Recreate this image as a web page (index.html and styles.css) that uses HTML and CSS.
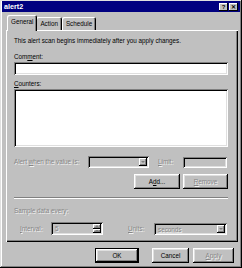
FILE: index.html
```html
<!DOCTYPE html>
<html lang="en">
    <head>
        <meta charset="UTF-8" />
        <title>alert2</title>
        <link rel="stylesheet" href="styles.css">
    </head>
    <body>
        <div class="dialog">
            <div class="titlebar">
                <span class="title">alert2</span>
                <div class="title-buttons">
                    <span class="tbtn">?</span>
                    <span class="tbtn">&#x2715;</span>
                </div>
            </div>

            <div class="tabs">
                <div class="tab active">General</div>
                <div class="tab">Action</div>
                <div class="tab">Schedule</div>
            </div>

            <div class="panel">
                <p class="intro">This alert scan begins immediately after you apply changes.</p>

                <label class="caption">Com<u>m</u>ent:</label>
                <div class="field"></div>

                <label class="caption gap-counters"><u>C</u>ounters:</label>
                <div class="field list"></div>

                <div class="row alert-row">
                    <span class="disabled alert-label">Alert <u>w</u>hen the value is:</span>
                    <div class="combo alert-combo"><span class="drop"><i class="arrow"></i></span></div>
                    <span class="disabled limit-label"><u>L</u>imit:</span>
                    <div class="field limit-field"></div>
                </div>

                <div class="row add-row">
                    <button class="btn add-btn">A<u>d</u>d...</button>
                    <button class="btn remove-btn disabled"><u>R</u>emove</button>
                </div>

                <div class="separator"></div>

                <div class="disabled sample">Sample data every:</div>

                <div class="row interval-row">
                    <span class="disabled interval-label"><u>I</u>nterval:</span>
                    <div class="field spin">
                        <span class="disabled value">5</span>
                        <span class="spin-btns">
                            <span class="spin-btn"><i class="arrow up"></i></span>
                            <span class="spin-btn"><i class="arrow"></i></span>
                        </span>
                    </div>
                    <span class="disabled units-label"><u>U</u>nits:</span>
                    <div class="combo units-combo">
                        <span class="disabled value">seconds</span>
                        <span class="drop"><i class="arrow"></i></span>
                    </div>
                </div>
            </div>

            <div class="footer">
                <button class="btn default ok-btn">OK</button>
                <button class="btn cancel-btn">Cancel</button>
                <button class="btn apply-btn disabled"><u>A</u>pply</button>
            </div>
        </div>
    </body>
</html>
```

FILE: styles.css
```css
* {
    box-sizing: border-box;
}

body {
    margin: 0;
    background: #c0c0c0;
    font-family: "Liberation Sans", Arial, sans-serif;
    font-size: 6.3px;
    line-height: 8px;
    color: #000;
}

u {
    text-decoration-thickness: 0.5px;
    text-underline-offset: 1px;
}

.dialog {
    width: 242px;
    height: 268px;
    padding: 1px 2px 2px;
    background: #c0c0c0;
    box-shadow: inset -1px -1px #000, inset 1px 1px #dfdfdf,
        inset -2px -2px #808080, inset 2px 2px #fff;
}

.titlebar {
    display: flex;
    align-items: center;
    justify-content: space-between;
    height: 11px;
    padding: 0 2px;
    background: #000080;
    color: #fff;
}

.title {
    font-weight: bold;
    font-size: 7.2px;
}

.title-buttons {
    display: flex;
    gap: 1px;
}

.tbtn {
    display: flex;
    align-items: center;
    justify-content: center;
    width: 9px;
    height: 8px;
    background: #c0c0c0;
    color: #000;
    font-size: 6px;
    font-weight: bold;
    box-shadow: inset -1px -1px #000, inset 1px 1px #fff;
}

/* tabs */

.tabs {
    display: flex;
    align-items: flex-end;
    height: 15px;
    margin: 3px 0 0 5px;
    padding-left: 1px;
}

.tab {
    height: 13px;
    padding: 0 4px;
    line-height: 13px;
    border-radius: 2px 2px 0 0;
    box-shadow: inset 1px 1px #fff, inset -1px 0 #000, inset -2px 0 #808080;
}

.tab.active {
    position: relative;
    z-index: 1;
    height: 16px;
    margin: 0 -1px -1px;
    padding: 0 4px 2px;
    background: #c0c0c0;
}

/* panel */

.panel {
    height: 212px;
    margin: 0 2px 0 4px;
    padding: 7px 10px 0 8px;
    box-shadow: inset 1px 1px #fff, inset -1px -1px #000,
        inset -2px -2px #808080;
}

.intro {
    margin: 0;
}

.caption {
    display: block;
    margin-top: 8px;
}

.caption.gap-counters {
    margin-top: 5px;
}

.field {
    height: 13px;
    margin-top: 1px;
    background: #fff;
    box-shadow: inset 1px 1px #808080, inset -1px -1px #fff,
        inset 2px 2px #000, inset -2px -2px #dfdfdf;
}

.field.list {
    height: 58px;
}

.disabled {
    color: #868686;
    text-shadow: 1px 1px 0 #f2f2f2;
}

.row {
    display: flex;
    align-items: center;
}

.alert-row {
    height: 12px;
    margin-top: 9px;
}

.alert-label {
    width: 74px;
}

.combo {
    display: flex;
    align-items: stretch;
    justify-content: space-between;
    height: 12px;
    padding: 2px;
    background: #c0c0c0;
    box-shadow: inset 1px 1px #808080, inset -1px -1px #fff,
        inset 2px 2px #000, inset -2px -2px #dfdfdf;
}

.alert-combo {
    width: 61px;
    justify-content: flex-end;
}

.drop,
.spin-btn {
    display: flex;
    align-items: center;
    justify-content: center;
    width: 8px;
    background: #c0c0c0;
    box-shadow: inset -1px -1px #000, inset 1px 1px #fff,
        inset -2px -2px #808080;
}

.arrow {
    width: 0;
    height: 0;
    border-left: 2px solid transparent;
    border-right: 2px solid transparent;
    border-top: 2px solid #808080;
}

.arrow.up {
    border-top: none;
    border-bottom: 2px solid #808080;
}

.limit-label {
    width: 25px;
    margin-left: 9px;
}

.field.limit-field {
    width: 44px;
    height: 11px;
    margin-top: 0;
    background: #c0c0c0;
}

.add-row {
    justify-content: flex-end;
    gap: 3px;
    height: 15px;
    margin-top: 6px;
}

.btn {
    height: 15px;
    padding: 0;
    border: none;
    background: #c0c0c0;
    font: inherit;
    color: #000;
    box-shadow: inset -1px -1px #000, inset 1px 1px #fff,
        inset -2px -2px #808080, inset 2px 2px #dfdfdf;
}

.btn.disabled {
    color: #868686;
}

.add-btn {
    width: 46px;
}

.remove-btn {
    width: 45px;
}

.separator {
    margin-top: 8px;
    border-top: 1px solid #808080;
    border-bottom: 1px solid #fff;
}

.sample {
    margin-top: 8px;
}

.interval-row {
    height: 13px;
    margin-top: 7px;
    padding-left: 6px;
}

.interval-label {
    width: 31px;
}

.field.spin {
    display: flex;
    justify-content: space-between;
    width: 52px;
    margin-top: 0;
    padding: 2px;
    background: #c0c0c0;
}

.value {
    padding-left: 2px;
    line-height: 9px;
}

.spin-btns {
    display: flex;
    flex-direction: column;
}

.spin-btn {
    flex: 1;
}

.units-label {
    width: 26px;
    margin-left: 25px;
}

.units-combo {
    width: 73px;
}

/* bottom buttons */

.footer {
    display: flex;
    justify-content: flex-end;
    height: 15px;
    margin-top: 6px;
    padding-right: 6px;
}

.ok-btn {
    width: 44px;
    margin-right: 13px;
}

.cancel-btn {
    width: 37px;
    margin-right: 4px;
}

.apply-btn {
    width: 41px;
}

.btn.default {
    box-shadow: inset 0 0 0 1px #000, inset -2px -2px #000,
        inset 2px 2px #fff, inset -3px -3px #808080, inset 3px 3px #dfdfdf;
}
```
